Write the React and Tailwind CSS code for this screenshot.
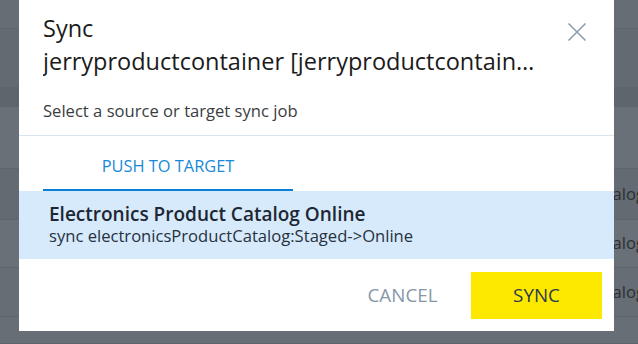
export default function App() {
  const bands = [
    { h: 'h-[29px]', bg: 'bg-[#676d74]' },
    { h: 'h-[59px]', bg: 'bg-[#646a71]' },
    { h: 'h-[19px]', bg: 'bg-[#5f656c]' },
    { h: 'h-[62px]', bg: 'bg-[#6a7077]' },
    { h: 'h-[51px]', bg: 'bg-[#646a71]', text: 'Catalog' },
    { h: 'h-[48px]', bg: 'bg-[#6a7077]', text: 'Catalog' },
    { h: 'h-[49px]', bg: 'bg-[#676d74]', text: 'Catalog' },
    { h: 'h-[27px]', bg: 'bg-[#686e75]' },
  ];

  return (
    <div className="relative w-[638px] h-[344px] overflow-hidden font-['Open_Sans',sans-serif]">
      {/* Page behind the overlay */}
      <div className="flex flex-col">
        {bands.map((b, i) => (
          <div
            key={i}
            className={`${b.h} ${b.bg} flex items-center border-b border-[#5e646b] pl-[587px] text-[16.6px] text-[#2b2f33]`}
          >
            {b.text}
          </div>
        ))}
      </div>

      {/* Dialog */}
      <div className="absolute left-[19px] top-0 w-[595px] h-[331px] bg-white flex flex-col">
        {/* Header */}
        <div className="flex pt-[12px] pl-[24px] pr-[27px]">
          <div className="w-[498px] text-[23.5px] leading-[33px] text-[#1b1b1b]">
            <div>Sync</div>
            <div className="truncate">jerryproductcontainer [jerryproductcontainer]</div>
          </div>
          <button className="ml-auto mt-[10px] h-[20px] w-[20px]" title="Close">
            <svg width="20" height="20" viewBox="0 0 20 20" fill="none" stroke="#8c9cb0" strokeWidth="1.6">
              <path d="M1.5 1.5l17 17M18.5 1.5l-17 17" />
            </svg>
          </button>
        </div>

        <p className="mt-[21px] pl-[24px] text-[16.6px] leading-[24px] text-[#3a3d40]">
          Select a source or target sync job
        </p>

        <div className="mt-[12px] h-px bg-[#dae4ee]" />

        {/* Tabs */}
        <div className="pl-[24px]">
          <div className="w-[250px] pt-[18px] pb-[11px] border-b-2 border-[#0a7fd6] text-center text-[16.4px] leading-[24px] text-[#1889d9]">
            PUSH TO TARGET
          </div>
        </div>

        {/* Selected job */}
        <div className="bg-[#d6eafc] pl-[30px] pt-[12px] h-[68px]">
          <div className="text-[19px] leading-[22px] font-semibold text-[#1d2733]">
            Electronics Product Catalog Online
          </div>
          <div className="text-[16.6px] leading-[21px] text-[#27313c]">
            sync electronicsProductCatalog:Staged-&gt;Online
          </div>
        </div>

        {/* Footer */}
        <div className="flex justify-end gap-[3px] pt-[13px] pr-[12px]">
          <button className="w-[131px] h-[47px] text-[18.8px] text-[#8797aa]">CANCEL</button>
          <button className="w-[131px] h-[47px] bg-[#fde900] text-[18.8px] text-[#2e3b4a]">SYNC</button>
        </div>
      </div>
    </div>
  );
}
